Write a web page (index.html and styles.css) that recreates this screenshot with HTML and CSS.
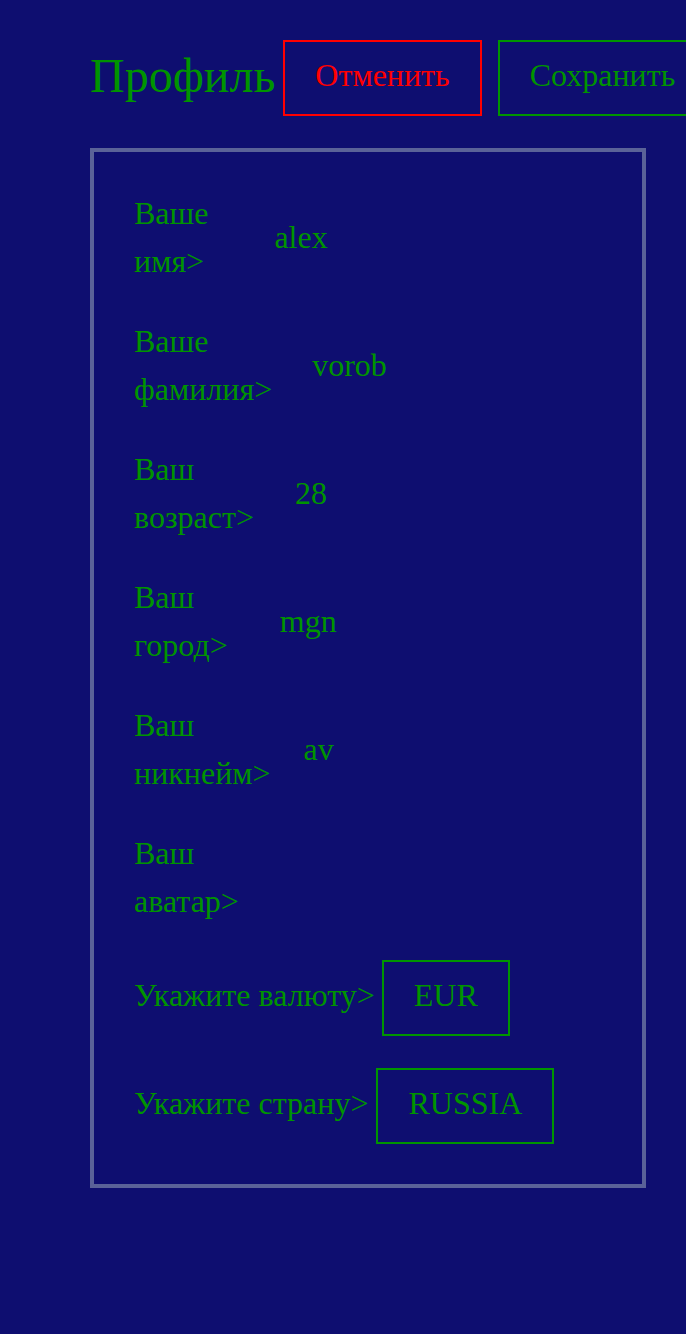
FILE: index.html
```html
<!DOCTYPE html>
<html lang="ru">
<head>
<meta charset="utf-8">
<title>Профиль</title>
<link rel="stylesheet" href="styles.css">
</head>
<body>
<div class="page">
  <header class="header">
    <h1 class="title">Профиль</h1>
    <button class="btn btn-cancel">Отменить</button>
    <button class="btn btn-save">Сохранить</button>
  </header>
  <section class="card">
    <div class="row">
      <span class="label">Ваше имя&gt;</span>
      <span class="value v-name">alex</span>
    </div>
    <div class="row">
      <span class="label">Ваше фамилия&gt;</span>
      <span class="value v-surname">vorob</span>
    </div>
    <div class="row">
      <span class="label">Ваш возраст&gt;</span>
      <span class="value v-age">28</span>
    </div>
    <div class="row">
      <span class="label">Ваш город&gt;</span>
      <span class="value v-city">mgn</span>
    </div>
    <div class="row">
      <span class="label">Ваш никнейм&gt;</span>
      <span class="value v-nick">av</span>
    </div>
    <div class="row">
      <span class="label">Ваш аватар&gt;</span>
    </div>
    <div class="row">
      <span class="label label-wide">Укажите валюту&gt;</span>
      <button class="btn btn-select">EUR</button>
    </div>
    <div class="row">
      <span class="label label-wide label-country">Укажите страну&gt;</span>
      <button class="btn btn-select">RUSSIA</button>
    </div>
  </section>
</div>
</body>
</html>
```

FILE: styles.css
```css
html, body {
  margin: 0;
  padding: 0;
  overflow: hidden;
}

body {
  background: #0e0e70;
  color: #009400;
  font-family: "Liberation Serif", "Times New Roman", serif;
  font-size: 32px;
  line-height: 48px;
  width: 686px;
  height: 1334px;
}

.page {
  padding: 40px 40px 0 90px;
}

.header {
  display: flex;
  align-items: center;
  white-space: nowrap;
  width: max-content;
}

.title {
  margin: 0 8px 0 0;
  padding-bottom: 4px;
  font-size: 48px;
  font-weight: normal;
  line-height: 56px;
}

.btn {
  font-family: inherit;
  font-size: 32px;
  line-height: 48px;
  padding: 9px 30px 15px;
  background: transparent;
  border: 2px solid #009400;
  color: #009400;
  margin: 0;
  white-space: nowrap;
}

.btn-cancel {
  border-color: #ff0000;
  color: #ff0000;
  margin-right: 16px;
}

.card {
  margin-top: 32px;
  border: 4px solid #5a6298;
  padding: 40px;
  display: flex;
  flex-direction: column;
  gap: 32px;
}

.row {
  display: flex;
  align-items: center;
}

.label,
.value {
  margin-top: -3px;
  margin-bottom: 3px;
}

.label {
  width: min-content;
}

.label-wide {
  width: auto;
  margin-right: 7px;
}

.label-country {
  margin-right: 8px;
}

.v-name { margin-left: 66px; }
.v-surname { margin-left: 40px; }
.v-age { margin-left: 41px; }
.v-city { margin-left: 52px; }
.v-nick { margin-left: 33px; }
```
